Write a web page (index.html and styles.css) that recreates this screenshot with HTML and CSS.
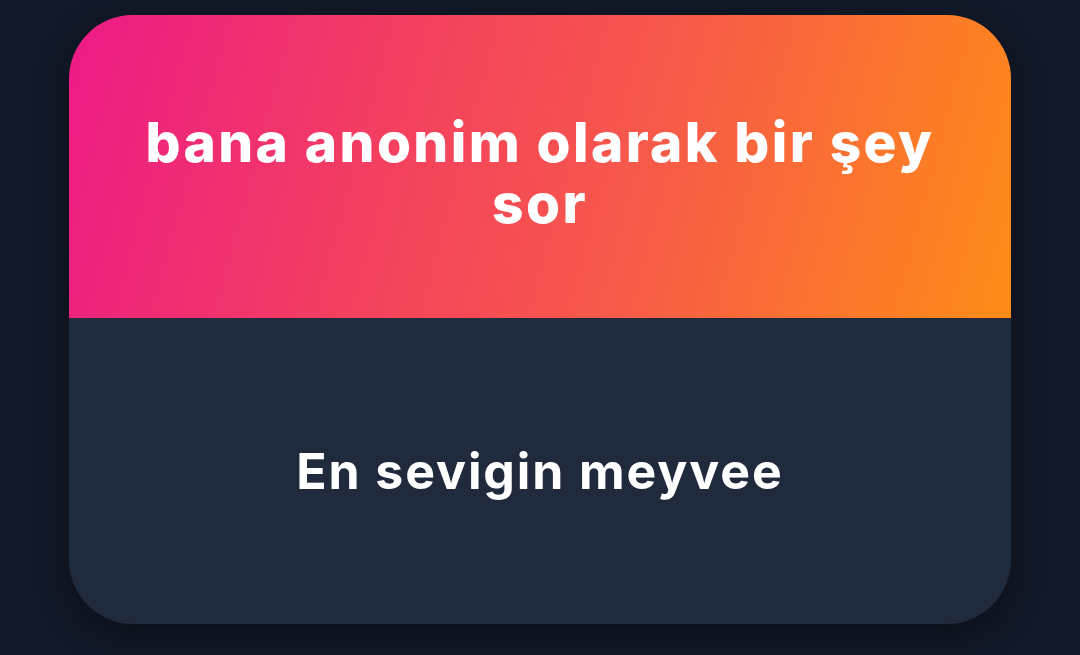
FILE: index.html
```html
<!DOCTYPE html>
<html lang="tr">
<head>
  <meta charset="UTF-8" />
  <meta name="viewport" content="width=device-width, initial-scale=1.0"/>
  <title>Anonim soru</title>
  <link rel="stylesheet" href="styles.css">
</head>
<body>
  <div class="kart">
    <div class="baslik">
      <h1>bana anonim olarak bir şey sor</h1>
    </div>
    <div class="soru">
      <p>En sevigin meyvee</p>
    </div>
  </div>
</body>
</html>
```

FILE: styles.css
```css
body {
  margin: 0;
  height: 655px;
  background: #111827;
  font-family: Inter, "Noto Sans", sans-serif;
  color: white;
  padding-top: 15px;
  box-sizing: border-box;
}

.kart {
  width: 942px;
  height: 609px;
  margin: 0 auto;
  border-radius: 64px;
  overflow: hidden;
  display: flex;
  flex-direction: column;
  background: #1f2a3c;
  box-shadow: 0 10px 30px rgba(0, 0, 0, 0.35);
}

.baslik {
  height: 303px;
  box-sizing: border-box;
  padding-top: 12px;
  display: flex;
  align-items: center;
  justify-content: center;
  background: linear-gradient(105deg, #ec1a86 0%, #f4405f 35%, #f7594a 60%, #ff8c17 100%);
}

.baslik h1 {
  margin: 0;
  max-width: 840px;
  font-size: 55px;
  font-weight: 800;
  line-height: 61px;
  text-align: center;
  letter-spacing: 2.4px;
}

.soru {
  flex: 1;
  display: flex;
  align-items: center;
  justify-content: center;
}

.soru p {
  margin: 0;
  font-size: 50px;
  font-weight: 700;
  letter-spacing: 1.9px;
}
```
